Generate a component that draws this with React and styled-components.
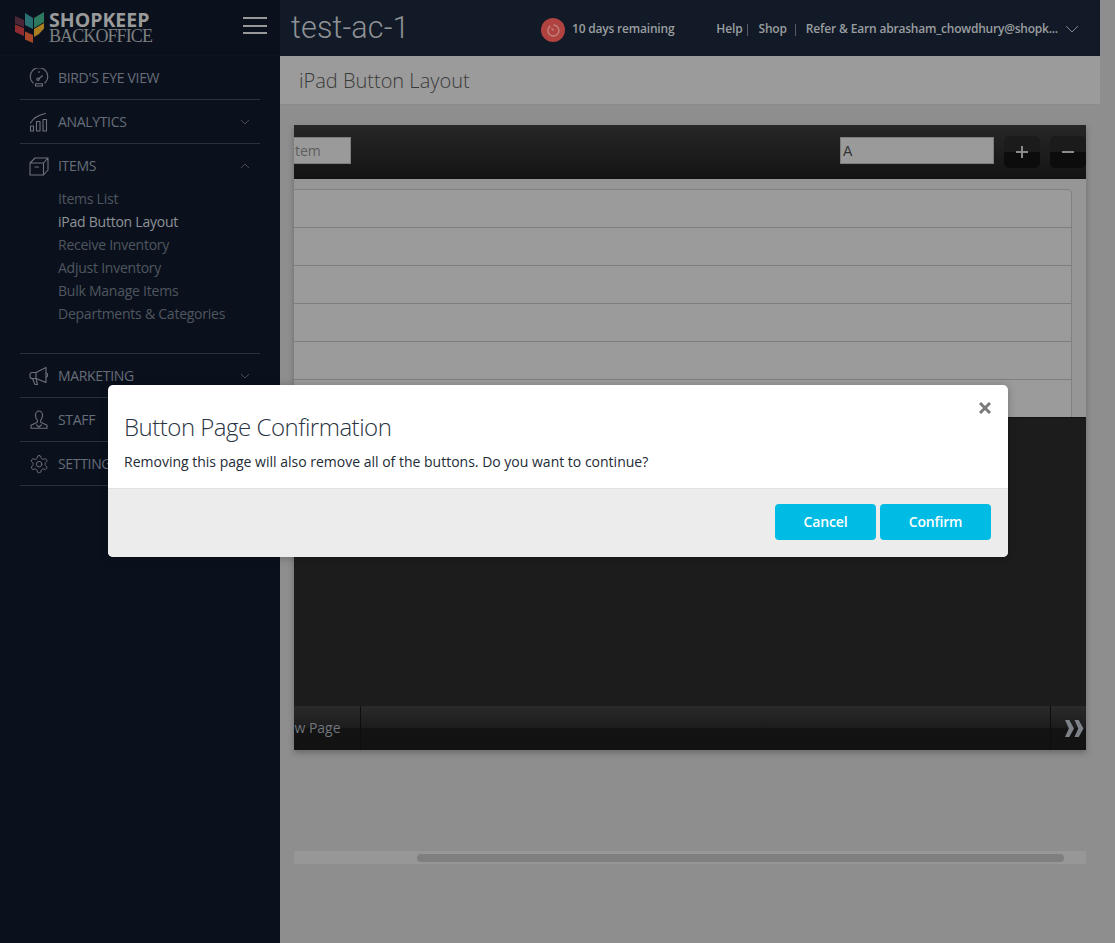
import React from "react";
import styled, { createGlobalStyle } from "styled-components";

const Global = createGlobalStyle`
  html, body { margin: 0; padding: 0; background: #8e8e8e; }
  * { box-sizing: border-box; }
  body { font-family: "Open Sans", sans-serif; }
  #root { width: 1115px; height: 943px; overflow: hidden; position: relative; }
`;

const Page = styled.div`
  display: grid;
  grid-template-columns: 280px 820px 15px;
  width: 1115px;
  height: 943px;
  position: relative;
  background: #8e8e8e;
`;

const Sidebar = styled.aside`
  background: #0a111d;
  height: 943px;
  display: flex;
  flex-direction: column;
`;

const Brand = styled.div`
  height: 56px;
  display: flex;
  align-items: center;
  padding: 0 13px 0 15px;
  border-bottom: 1px solid #0d1520;
`;

const BrandText = styled.div`
  display: flex;
  flex-direction: column;
  margin-left: 5px;
  flex: 1;
`;

const BrandTop = styled.span`
  font: 700 19.5px/16px "Open Sans", sans-serif;
  color: #9a9a9a;
`;

const BrandBottom = styled.span`
  font: 400 18px/16px "Liberation Serif", serif;
  letter-spacing: -0.9px;
  color: #7c7f80;
`;

const Burger = styled.div`
  width: 24px;
  display: flex;
  flex-direction: column;
  gap: 5.5px;
  margin-top: -4px;
  & > i { display: block; height: 2px; background: #989898; }
`;

const Nav = styled.nav`
  padding: 0 20px;
  display: flex;
  flex-direction: column;
`;

const NavGroup = styled.div`
  border-bottom: 1px solid #2a313c;
`;

const NavRow = styled.div`
  height: 43px;
  display: flex;
  align-items: center;
  padding-left: 9px;
  padding-right: 10px;
`;

const NavIcon = styled.svg`
  width: 20px;
  height: 20px;
  flex: none;
  fill: none;
  stroke: #6d7178;
  stroke-width: 1.1;
  stroke-linecap: round;
  stroke-linejoin: round;
`;

const NavLabel = styled.span`
  margin-left: 9px;
  flex: 1;
  font: 400 14px/20px "Open Sans", sans-serif;
  letter-spacing: -0.33px;
  color: #676d78;
  white-space: nowrap;
`;

const Caret = styled.svg`
  width: 10px;
  height: 6px;
  fill: none;
  stroke: #454a52;
  stroke-width: 1;
`;

const SubList = styled.div`
  display: flex;
  flex-direction: column;
  padding: 0 0 28px 38px;
`;

const SubItem = styled.div`
  height: 23px;
  font: 400 14px/23px "Open Sans", sans-serif;
  letter-spacing: -0.24px;
  color: ${p => (p.$active ? "#8f9296" : "#50565f")};
`;

const Main = styled.main`
  display: flex;
  flex-direction: column;
  height: 943px;
`;

const TopBar = styled.header`
  height: 56px;
  background: #111a26;
  display: flex;
  align-items: center;
  padding-left: 11px;
`;

const Store = styled.div`
  font: 300 30.5px/38px Roboto, "Open Sans", sans-serif;
  letter-spacing: 0.15px;
  color: #8e9195;
  width: 250px;
  margin-top: -1px;
`;

const Timer = styled.div`
  width: 24px;
  height: 24px;
  border-radius: 50%;
  background: #b0423f;
  display: flex;
  align-items: center;
  justify-content: center;
  flex: none;
  margin-top: 4px;
`;

const TopText = styled.span`
  font: 600 12px/16px "Open Sans", sans-serif;
  letter-spacing: ${p => p.$ls ?? -0.16}px;
  color: #9a9da0;
  white-space: nowrap;
  margin-left: ${p => p.$ml || 0}px;
  margin-top: 2px;
`;

const Pipe = styled.i`
  width: 1px;
  height: 12px;
  background: #565c64;
  margin-top: 3px;
  margin-left: ${p => p.$ml}px;
`;

const TopChevron = styled.svg`
  width: 14px;
  height: 8px;
  margin-left: 7px;
  fill: none;
  stroke: #7f848a;
  stroke-width: 1;
  margin-top: 1px;
`;

const TitleBar = styled.div`
  height: 49px;
  background: #9b9b9b;
  border-bottom: 1px solid #8a8a8a;
  padding-left: 19px;
  font: 300 20px/49px "Open Sans", sans-serif;
  color: #3a3a3a;
`;

const Workspace = styled.div`
  padding: 20px 14px 0;
  display: flex;
  flex-direction: column;
`;

const Panel = styled.section`
  width: 792px;
  height: 625px;
  overflow: hidden;
  box-shadow: 0 3px 6px rgba(0,0,0,.25);
  background: #919191;
`;

const PanelInner = styled.div`
  width: 852px;
  margin-left: -60px;
  display: flex;
  flex-direction: column;
  height: 100%;
`;

const Toolbar = styled.div`
  height: 54px;
  flex: none;
  background: linear-gradient(#272727, #131313);
  display: flex;
  align-items: flex-start;
  padding: 12px 0 0 54px;
`;

const ToolInput = styled.div`
  height: 27px;
  width: ${p => p.$w}px;
  background: #9a9a9a;
  border: 1px solid #7d7d7d;
  margin-left: ${p => p.$ml || 0}px;
  font: ${p => p.$mono ? '400 14px/26px "Liberation Sans", sans-serif' : '400 14px/25px "Open Sans", sans-serif'};
  padding-left: 2px;
  color: ${p => p.$mono ? "#333" : "#5e5e5e"};
`;

const ToolButton = styled.div`
  width: 36px;
  height: 32px;
  border-radius: 5px;
  margin-left: ${p => p.$ml}px;
  margin-top: -1px;
  flex: none;
  background: linear-gradient(#1b1b1b 0 50%, #0c0c0c 50% 100%);
  display: flex;
  align-items: center;
  justify-content: center;
  & > svg { width: 12px; height: 12px; stroke: #8a8a8a; stroke-width: 2; }
`;

const RowsArea = styled.div`
  height: 238px;
  flex: none;
  padding: 10px 14px 0 0;
  background: #969696;
  overflow: hidden;
`;

const RowsBox = styled.div`
  background: #9b9b9b;
  border: 1px solid #808080;
  border-radius: 5px;
  height: 260px;
  display: flex;
  flex-direction: column;
`;

const LayoutRow = styled.div`
  height: 38px;
  flex: none;
  border-bottom: 1px solid #7e7e7e;
`;

const Stage = styled.div`
  height: 289px;
  flex: none;
  background: #1c1c1c;
  border-top: 1px solid #121212;
`;

const Tabs = styled.div`
  height: 44px;
  flex: none;
  display: flex;
  background: linear-gradient(#2a2a2a, #1c1c1c 50%, #131313 50%, #121212);
`;

const NewPage = styled.div`
  width: 127px;
  padding-left: 42px;
  border-right: 1px solid #0d0d0d;
  font: 400 14px/44px "Open Sans", sans-serif;
  color: #70757c;
  white-space: nowrap;
`;

const TabFill = styled.div`
  flex: 1;
  border-right: 1px solid #0d0d0d;
`;

const NextPage = styled.div`
  width: 35px;
  flex: none;
  display: flex;
  align-items: center;
  padding-left: 14px;
  & > svg { width: 19px; height: 17px; fill: #7c8288; flex: none; }
`;

const Track = styled.div`
  margin-top: 101px;
  width: 792px;
  height: 13px;
  background: #979797;
  padding: 3px 22px 0 123px;
`;

const Thumb = styled.div`
  height: 8px;
  border-radius: 4px;
  background: #7f7f7f;
`;

const RightStrip = styled.div`
  background: #8e8e8e;
`;

const Modal = styled.div`
  position: absolute;
  left: 108px;
  top: 385px;
  width: 900px;
  height: 172px;
  background: #fff;
  border-radius: 5px;
  box-shadow: 0 1px 8px rgba(0,0,0,.25);
  display: flex;
  flex-direction: column;
  overflow: hidden;
`;

const ModalBody = styled.div`
  height: 103px;
  padding: 25px 16px 0;
  position: relative;
`;

const ModalTitle = styled.h2`
  margin: 0;
  font: 300 24px/34px "Open Sans", sans-serif;
  letter-spacing: -0.49px;
  color: #2a3442;
`;

const ModalText = styled.p`
  margin: 8px 0 0;
  font: 400 14px/20px "Open Sans", sans-serif;
  color: #222b36;
`;

const Close = styled.svg`
  position: absolute;
  right: 17px;
  top: 17px;
  width: 12px;
  height: 12px;
  stroke: #7a7a7a;
  stroke-width: 3;
`;

const ModalFooter = styled.div`
  flex: 1;
  background: #ececec;
  border-top: 1px solid #e2e2e2;
  display: flex;
  justify-content: flex-end;
  align-items: flex-start;
  padding: 15px 17px 0 0;
  gap: 4px;
`;

const ModalButton = styled.button`
  width: ${p => p.$w}px;
  height: 36px;
  border: 0;
  border-radius: 4px;
  background: #00bce4;
  color: #fff;
  font: 600 14px/36px "Open Sans", sans-serif;
  letter-spacing: -0.15px;
  padding: 0;
`;

const icons = {
  gauge: <><path d="M4 15A8.800 8.800 0 1 1 16 15" /><path d="M9.800 10.800 13.500 7.800" /><circle cx="9" cy="11.200" r="1.200" /><rect x="6.500" y="15.800" width="7" height="2.200" /><path d="M10 3.600v.8" /></>,
  chart: <><rect x="1.500" y="14" width="3" height="5" /><rect x="7.500" y="9.500" width="3.500" height="9.500" /><rect x="14" y="7.500" width="3.500" height="11.500" /><path d="M1.500 11C4 6.500 9 3 16.500 1.500" /></>,
  box: <><path d="M1 7h13.500v12H1zM1 7l5-5h13v12l-4.500 5M14.500 7 19 2" /><path d="M6 11h3.500" /></>,
  mega: <><path d="M7 6.500 17 1.500v15L7 12.500H3A2 2 0 0 1 1 10.500v-2A2 2 0 0 1 3 6.500z" /><path d="M7 6.500v6M3.500 12.500 6 18.500h2.500L7 12.500" /><path d="M17 7c2.200 0 2.200 4 0 4" /></>,
  user: <><path d="M6.500 5.200a3.500 4.200 0 1 1 7 0c0 2.300-1 3.800-1.800 4.800v2.300l6.300 3v3H2v-3l6.300-3V10c-.8-1-1.800-2.500-1.800-4.800z" /><path d="M7.500 14.800l2.500 2.200 2.500-2.200" /></>,
  gear: <g transform="scale(.86) translate(-.2 -.2)"><path d="M12.220 2h-.44a2 2 0 0 0-2 2v.18a2 2 0 0 1-1 1.730l-.43.250a2 2 0 0 1-2 0l-.150-.080a2 2 0 0 0-2.730.730l-.220.380a2 2 0 0 0 .730 2.730l.150.100a2 2 0 0 1 1 1.720v.510a2 2 0 0 1-1 1.740l-.150.090a2 2 0 0 0-.730 2.730l.220.380a2 2 0 0 0 2.730.730l.150-.080a2 2 0 0 1 2 0l.430.250a2 2 0 0 1 1 1.730V20a2 2 0 0 0 2 2h.440a2 2 0 0 0 2-2v-.180a2 2 0 0 1 1-1.730l.430-.250a2 2 0 0 1 2 0l.150.080a2 2 0 0 0 2.730-.730l.220-.390a2 2 0 0 0-.730-2.730l-.150-.080a2 2 0 0 1-1-1.740v-.5a2 2 0 0 1 1-1.740l.150-.090a2 2 0 0 0 .730-2.730l-.220-.380a2 2 0 0 0-2.730-.730l-.150.080a2 2 0 0 1-2 0l-.430-.250a2 2 0 0 1-1-1.730V4a2 2 0 0 0-2-2z" /><circle cx="12" cy="12" r="3.200" /></g>,
};

const Item = ({ icon, label, caret }) => (
  <NavRow>
    <NavIcon viewBox="0 0 20 20">{icons[icon]}</NavIcon>
    <NavLabel>{label}</NavLabel>
    {caret && (
      <Caret viewBox="0 0 10 6">
        <path d={caret === "down" ? "M1 1l4 4 4-4" : "M1 5l4-4 4 4"} />
      </Caret>
    )}
  </NavRow>
);

const Logo = () => (
  <svg width="29" height="31" viewBox="0 0 29 31">
    <path d="M0 4 9 8v7L0 11.500z" fill="#4b2636" />
    <path d="M0 12.500 9 16v8L0 20z" fill="#8e2c32" />
    <path d="M10 19.500 18 23v8l-8-3.500z" fill="#a8482a" />
    <path d="M10 1 18 6v11l-8-4z" fill="#2a6f72" />
    <path d="M19 6 29 0v10l-10 6z" fill="#2e7a5e" />
    <path d="M19 17 29 11v5.500L24 22l-5 3z" fill="#a97e22" />
  </svg>
);

export default function App() {
  return (
    <Page>
      <Global />
      <Sidebar>
        <Brand>
          <Logo />
          <BrandText>
            <BrandTop>SHOPKEEP</BrandTop>
            <BrandBottom>BACKOFFICE</BrandBottom>
          </BrandText>
          <Burger><i /><i /><i /></Burger>
        </Brand>
        <Nav>
          <NavGroup><Item icon="gauge" label="BIRD'S EYE VIEW" /></NavGroup>
          <NavGroup><Item icon="chart" label="ANALYTICS" caret="down" /></NavGroup>
          <NavGroup>
            <Item icon="box" label="ITEMS" caret="up" />
            <SubList>
              <SubItem>Items List</SubItem>
              <SubItem $active>iPad Button Layout</SubItem>
              <SubItem>Receive Inventory</SubItem>
              <SubItem>Adjust Inventory</SubItem>
              <SubItem>Bulk Manage Items</SubItem>
              <SubItem>Departments &amp; Categories</SubItem>
            </SubList>
          </NavGroup>
          <NavGroup><Item icon="mega" label="MARKETING" caret="down" /></NavGroup>
          <NavGroup><Item icon="user" label="STAFF" /></NavGroup>
          <NavGroup><Item icon="gear" label="SETTINGS" /></NavGroup>
        </Nav>
      </Sidebar>

      <Main>
        <TopBar>
          <Store>test-ac-1</Store>
          <Timer>
            <svg width="15" height="15" viewBox="0 0 15 15" fill="none" stroke="#c28480" strokeWidth="1.400">
              <path d="M4.500 2.800A5.500 5.500 0 1 0 7.500 2" />
              <path d="M7.500 7.500 5.500 5.300" />
            </svg>
          </Timer>
          <TopText $ml={7} $ls={-0.2}>10 days remaining</TopText>
          <TopText $ml={42}>Help</TopText>
          <Pipe $ml={5} />
          <TopText $ml={10}>Shop</TopText>
          <Pipe $ml={8} />
          <TopText $ml={10}>Refer &amp; Earn</TopText>
          <TopText $ml={3} $ls={-0.22}>abrasham_chowdhury@shopk...</TopText>
          <TopChevron viewBox="0 0 14 8"><path d="M1 1l6 6 6-6" /></TopChevron>
        </TopBar>
        <TitleBar>iPad Button Layout</TitleBar>
        <Workspace>
          <Panel>
            <PanelInner>
              <Toolbar>
                <ToolInput $w={63}>Item</ToolInput>
                <ToolInput $w={154} $ml={489} $mono>A</ToolInput>
                <ToolButton $ml={10}>
                  <svg viewBox="0 0 12 12"><path d="M6 0v12M0 6h12" /></svg>
                </ToolButton>
                <ToolButton $ml={10}>
                  <svg viewBox="0 0 12 12"><path d="M0 6h12" /></svg>
                </ToolButton>
              </Toolbar>
              <RowsArea>
                <RowsBox>
                  {[0, 1, 2, 3, 4, 5].map(i => <LayoutRow key={i} />)}
                </RowsBox>
              </RowsArea>
              <Stage />
              <Tabs>
                <NewPage>New Page</NewPage>
                <TabFill />
                <NextPage>
                  <svg viewBox="0 0 20 18">
                    <path d="M0 0h4.500l5 9-5 9H0l4-9zM10 0h4.500l5 9-5 9H10l4-9z" />
                  </svg>
                </NextPage>
              </Tabs>
            </PanelInner>
          </Panel>
          <Track><Thumb /></Track>
        </Workspace>
      </Main>
      <RightStrip />

      <Modal>
        <ModalBody>
          <ModalTitle>Button Page Confirmation</ModalTitle>
          <ModalText>Removing this page will also remove all of the buttons. Do you want to continue?</ModalText>
          <Close viewBox="0 0 12 12"><path d="M1 1l10 10M11 1 1 11" /></Close>
        </ModalBody>
        <ModalFooter>
          <ModalButton $w={101}>Cancel</ModalButton>
          <ModalButton $w={111}>Confirm</ModalButton>
        </ModalFooter>
      </Modal>
    </Page>
  );
}
